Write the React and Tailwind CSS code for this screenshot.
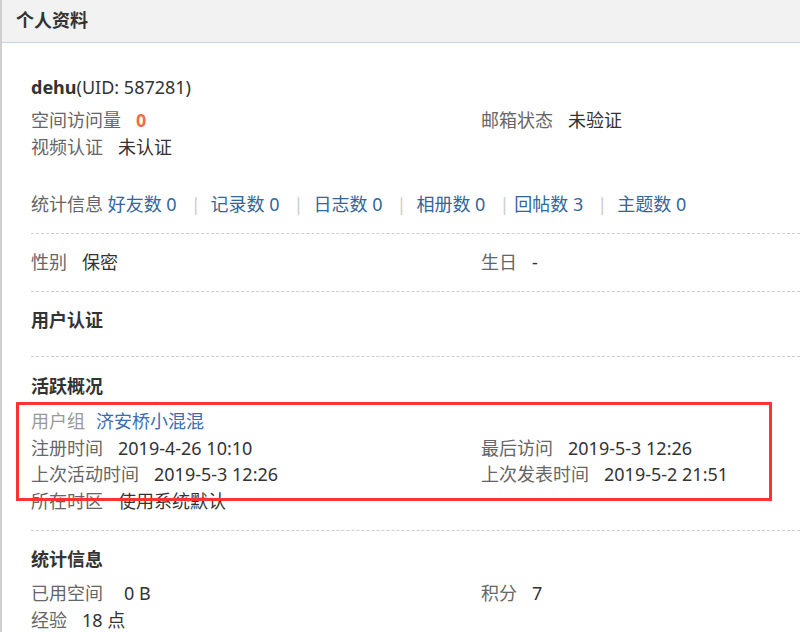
import React from "react";

const font = {
  fontFamily: '"Noto Sans", "Noto Sans CJK SC", sans-serif',
};

const Item = ({ label, children, labelClass = "mr-[15px] text-[#666]" }) => (
  <div className="whitespace-nowrap">
    <span className={labelClass}>{label}</span>
    <span className="text-[#333]">{children}</span>
  </div>
);

const Pipe = ({ after = "mr-[10px]" }) => (
  <span className={`ml-[14px] ${after} text-[#ccc]`}>|</span>
);

const StatLink = ({ children }) => (
  <a className="text-[#369] no-underline">{children}</a>
);

export default function App() {
  return (
    <div
      className="relative h-[632px] w-[800px] overflow-hidden border-l-2 border-[#cfcfcf] bg-white text-[18px] leading-[27px] text-[#333]"
      style={font}
    >
      <div className="h-[43px] border-b border-[#c2d5e3] bg-[#f2f2f2] pl-[14px] text-[18px] font-bold leading-[40px] text-[#333]">
        个人资料
      </div>

      <div className="ml-[29px]">
        <div className="border-b border-dashed border-[#cdcdcd] pb-[15px] pt-[31px]">
          <div>
            <span className="font-bold">dehu</span>
            <span>(UID: 587281)</span>
          </div>
          <div className="mt-[6px] grid grid-cols-[450px_1fr]">
            <Item label="空间访问量">
              <span className="font-bold text-[#f26c4f]">0</span>
            </Item>
            <Item label="邮箱状态">未验证</Item>
            <Item label="视频认证">未认证</Item>
          </div>
          <div className="mt-[30px] whitespace-nowrap">
            <span className="text-[#666]">统计信息 </span>
            <StatLink>好友数 0</StatLink>
            <Pipe />
            <StatLink>记录数 0</StatLink>
            <Pipe />
            <StatLink>日志数 0</StatLink>
            <Pipe />
            <StatLink>相册数 0</StatLink>
            <Pipe after="mr-[5px]" />
            <StatLink>回帖数 3</StatLink>
            <Pipe />
            <StatLink>主题数 0</StatLink>
          </div>
        </div>

        <div className="grid grid-cols-[450px_1fr] border-b border-dashed border-[#cdcdcd] pb-[15px] pt-[15px]">
          <Item label="性别">保密</Item>
          <Item label="生日">-</Item>
        </div>

        <div className="border-b border-dashed border-[#cdcdcd] pb-[22px] pt-[15px]">
          <h2 className="font-bold">用户认证</h2>
        </div>

        <div className="border-b border-dashed border-[#cdcdcd] pb-[16px] pt-[16px]">
          <h2 className="font-bold">活跃概况</h2>
          <div className="mt-[8px] grid grid-cols-[450px_1fr] leading-[26.5px]">
            <div className="col-span-2 whitespace-nowrap">
              <span className="mr-[11px] text-[#999]">用户组</span>
              <a className="text-[#3b6db3]">济安桥小混混</a>
            </div>
            <Item label="注册时间">2019-4-26 10:10</Item>
            <Item label="最后访问">2019-5-3 12:26</Item>
            <Item label="上次活动时间">2019-5-3 12:26</Item>
            <Item label="上次发表时间">2019-5-2 21:51</Item>
            <Item label="所在时区">使用系统默认</Item>
          </div>
        </div>

        <div className="pt-[15px]">
          <h2 className="font-bold">统计信息</h2>
          <div className="mt-[7px] grid grid-cols-[450px_1fr] leading-[26.5px]">
            <Item label="已用空间" labelClass="mr-[21px] text-[#666]">
              0 B
            </Item>
            <Item label="积分">7</Item>
            <Item label="经验">18 点</Item>
          </div>
        </div>
      </div>

      <div className="pointer-events-none absolute left-[14px] top-[402px] h-[99px] w-[756px] border-[3px] border-[#f33]" />
    </div>
  );
}
